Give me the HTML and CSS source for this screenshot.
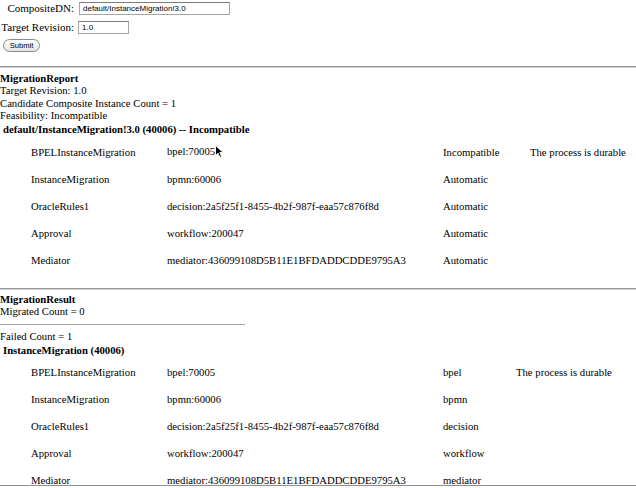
FILE: index.html
```html
<!DOCTYPE html>
<html>
<head>
<meta charset="utf-8">
<title>Instance Migration</title>
<link rel="stylesheet" href="styles.css">
</head>
<body>
<form class="query">
  <div class="field">
    <label class="field-label">CompositeDN:</label>
    <input class="text-input wide" type="text" value="default/InstanceMigration!3.0">
  </div>
  <div class="field">
    <label class="field-label">Target Revision:</label>
    <input class="text-input narrow" type="text" value="1.0">
  </div>
  <button class="submit" type="button">Submit</button>
</form>
<hr class="rule rule-first">
<section class="report">
  <div class="lines">
    <b>MigrationReport</b><br>
    Target Revision: 1.0<br>
    Candidate Composite Instance Count = 1<br>
    Feasibility: Incompatible
  </div>
  <div class="group-title">default/InstanceMigration!3.0 (40006) -- Incompatible</div>
  <div class="rows report-rows">
    <div class="row"><span>BPELInstanceMigration</span><span>bpel:70005<svg class="cursor" width="9" height="13" viewBox="0 0 9 13"><path d="M0.5 0.5 L0.5 10.5 L3 8.2 L4.8 12.3 L6.6 11.5 L4.8 7.5 L8.2 7.5 Z" fill="#000" stroke="#fff" stroke-width="0.9"/></svg></span><span>Incompatible</span><span>The process is durable</span></div>
    <div class="row"><span>InstanceMigration</span><span>bpmn:60006</span><span>Automatic</span><span></span></div>
    <div class="row"><span>OracleRules1</span><span>decision:2a5f25f1-8455-4b2f-987f-eaa57c876f8d</span><span>Automatic</span><span></span></div>
    <div class="row"><span>Approval</span><span>workflow:200047</span><span>Automatic</span><span></span></div>
    <div class="row"><span>Mediator</span><span>mediator:436099108D5B11E1BFDADDCDDE9795A3</span><span>Automatic</span><span></span></div>
  </div>
</section>
<hr class="rule rule-second">
<section class="result">
  <div class="lines result-head">
    <b>MigrationResult</b><br>
    Migrated Count = 0
  </div>
  <hr class="short-rule">
  <div class="lines failed">Failed Count = 1</div>
  <div class="group-title">InstanceMigration (40006)</div>
  <div class="rows result-rows">
    <div class="row"><span>BPELInstanceMigration</span><span>bpel:70005</span><span>bpel</span><span>The process is durable</span></div>
    <div class="row"><span>InstanceMigration</span><span>bpmn:60006</span><span>bpmn</span><span></span></div>
    <div class="row"><span>OracleRules1</span><span>decision:2a5f25f1-8455-4b2f-987f-eaa57c876f8d</span><span>decision</span><span></span></div>
    <div class="row"><span>Approval</span><span>workflow:200047</span><span>workflow</span><span></span></div>
    <div class="row"><span>Mediator</span><span>mediator:436099108D5B11E1BFDADDCDDE9795A3</span><span>mediator</span><span></span></div>
  </div>
</section>
<div class="window-edge"></div>
</body>
</html>
```
FILE: styles.css
```css
html, body {
  overflow: hidden;
}
body {
  margin: 0;
  background: #fff;
  color: #000;
  font-family: "Liberation Serif", "Times New Roman", serif;
  font-size: 10.7px;
  line-height: 12.3px;
}
.query {
  margin: 0;
  padding-top: 1px;
}
.field {
  display: flex;
  align-items: center;
  height: 14px;
  margin-bottom: 5px;
  padding-left: 1px;
}
.field-label {
  width: 73px;
  text-align: right;
  margin-right: 4px;
  white-space: nowrap;
  font-size: 11px;
}
.text-input {
  box-sizing: border-box;
  height: 13px;
  margin: 0;
  padding: 0 3px;
  border: 1px solid #a5a5a5;
  border-top-color: #7c7c7c;
  font-family: "Liberation Sans", Arial, sans-serif;
  font-size: 8px;
  color: #000;
  background: #fff;
}
.wide {
  width: 151px;
  margin-left: 1px;
}
.narrow {
  width: 51px;
}
.submit {
  display: block;
  box-sizing: border-box;
  margin: 0 0 0 3px;
  width: 37px;
  height: 13px;
  padding: 0;
  border: 1px solid #8a8a8a;
  border-radius: 7px;
  background: linear-gradient(#ffffff, #e4e4e4);
  font-family: "Liberation Sans", Arial, sans-serif;
  font-size: 7.6px;
  color: #000;
}
.rule {
  height: 0;
  margin: 0;
  border: 0;
  border-top: 1px solid #979797;
  border-bottom: 1px solid #cfcfcf;
}
.rule-first {
  margin-top: 14px;
}
.rule-second {
  margin-top: 14.5px;
}
.lines {
  margin-top: 4px;
}
.result-head {
  margin-top: 3px;
}
.short-rule {
  width: 245px;
  height: 0;
  margin: 6.4px 0 0 0;
  border: 0;
  border-top: 1px solid #a0a0a0;
}
.failed {
  margin-top: 5px;
}
.group-title {
  margin-top: 1.7px;
  padding-left: 3px;
  font-weight: bold;
}
.rows {
  margin-top: 3.2px;
  padding-left: 31px;
}
.result-rows {
  margin-top: 2.2px;
}
.row {
  display: grid;
  height: 27px;
  align-items: center;
  white-space: nowrap;
}
.report-rows .row {
  grid-template-columns: 136px 276px 87px auto;
}
.result-rows .row {
  grid-template-columns: 136px 276px 73px auto;
}
.cursor {
  vertical-align: -3px;
  margin-left: 0;
}
.window-edge {
  position: fixed;
  left: 0;
  right: 0;
  bottom: 0;
  height: 2px;
  border-top: 1px solid #8e8e8e;
  background: #fff;
}
```
